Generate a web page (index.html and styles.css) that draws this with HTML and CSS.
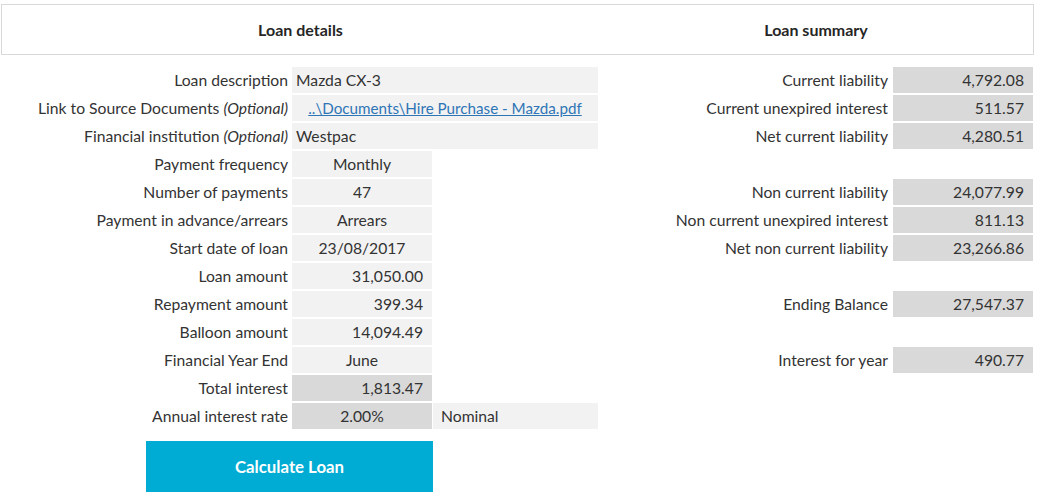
FILE: index.html
```html
<!DOCTYPE html>
<html>
<head>
<meta charset="utf-8">
<link rel="stylesheet" href="styles.css">
</head>
<body>
<div class="page">
  <header class="heading">
    <div class="heading-title">Loan details</div>
    <div class="heading-title">Loan summary</div>
  </header>
  <div class="content">
    <section class="details">
      <div class="details-grid">
        <div class="label">Loan description</div>
        <div class="cell light wide left">Mazda CX-3</div>

        <div class="label">Link to Source Documents <i>(Optional)</i></div>
        <div class="cell light wide center"><a class="link" href="#">..\Documents\Hire Purchase - Mazda.pdf</a></div>

        <div class="label">Financial institution <i>(Optional)</i></div>
        <div class="cell light wide left">Westpac</div>

        <div class="label">Payment frequency</div>
        <div class="cell light center">Monthly</div>
        <div></div>

        <div class="label">Number of payments</div>
        <div class="cell light center">47</div>
        <div></div>

        <div class="label">Payment in advance/arrears</div>
        <div class="cell light center">Arrears</div>
        <div></div>

        <div class="label">Start date of loan</div>
        <div class="cell light center">23/08/2017</div>
        <div></div>

        <div class="label">Loan amount</div>
        <div class="cell light right">31,050.00</div>
        <div></div>

        <div class="label">Repayment amount</div>
        <div class="cell light right">399.34</div>
        <div></div>

        <div class="label">Balloon amount</div>
        <div class="cell light right">14,094.49</div>
        <div></div>

        <div class="label">Financial Year End</div>
        <div class="cell light center">June</div>
        <div></div>

        <div class="label">Total interest</div>
        <div class="cell dark right">1,813.47</div>
        <div></div>

        <div class="label">Annual interest rate</div>
        <div class="cell dark center">2.00%</div>
        <div class="cell light indent side">Nominal</div>
      </div>
      <div class="actions">
        <button class="calc-btn" type="button">Calculate Loan</button>
      </div>
    </section>
    <section class="summary">
      <div class="summary-grid">
        <div class="label">Current liability</div>
        <div class="cell dark right">4,792.08</div>
        <div class="label">Current unexpired interest</div>
        <div class="cell dark right">511.57</div>
        <div class="label">Net current liability</div>
        <div class="cell dark right">4,280.51</div>
        <div class="spacer"></div>

        <div class="label">Non current liability</div>
        <div class="cell dark right">24,077.99</div>
        <div class="label">Non current unexpired interest</div>
        <div class="cell dark right">811.13</div>
        <div class="label">Net non current liability</div>
        <div class="cell dark right">23,266.86</div>
        <div class="spacer"></div>

        <div class="label">Ending Balance</div>
        <div class="cell dark right">27,547.37</div>
        <div class="spacer"></div>

        <div class="label">Interest for year</div>
        <div class="cell dark right">490.77</div>
      </div>
    </section>
  </div>
</div>
</body>
</html>
```

FILE: styles.css
```css
* { box-sizing: border-box; }
html, body { margin: 0; padding: 0; background: #ffffff; }
body {
  font-family: Lato, "Liberation Sans", sans-serif;
  font-size: 15.7px;
  color: #333333;
}
.page {
  padding: 4px 0 0 1px;
  width: 1034px;
}
.heading {
  display: grid;
  grid-template-columns: 597px 1fr;
  height: 51px;
  border: 1px solid #d9d9d9;
  align-items: center;
}
.heading-title {
  text-align: center;
  font-weight: bold;
  font-size: 16px;
  color: #262626;
}
.content {
  display: flex;
  margin-left: -1px;
  padding-top: 12px;
}
.details { width: 598px; }
.details-grid {
  display: grid;
  grid-template-columns: 292px 140px 166px;
  grid-auto-rows: 26px;
  row-gap: 2px;
}
.details-grid > .label { padding-right: 4px; }
.side { margin-left: 1px; }
.label {
  text-align: right;
  line-height: 26px;
  white-space: nowrap;
}
.label i { font-style: italic; }
.cell {
  line-height: 26px;
  white-space: nowrap;
  overflow: hidden;
}
.light { background: #f2f2f2; }
.dark { background: #d9d9d9; }
.wide { grid-column: span 2; }
.left { text-align: left; padding-left: 4px; }
.center { text-align: center; }
.right { text-align: right; padding-right: 9px; }
.indent { padding-left: 8px; }
.link { color: #2e75b6; text-decoration: underline; font-size: 15.2px; }
.actions {
  padding: 12px 0 0 146px;
}
.calc-btn {
  display: block;
  width: 287px;
  height: 51px;
  border: 0;
  background: #00acd4;
  color: #ffffff;
  font-family: Lato, "Liberation Sans", sans-serif;
  font-weight: bold;
  font-size: 16.8px;
  padding: 0;
}
.summary {
  width: 435px;
}
.summary-grid {
  display: grid;
  grid-template-columns: 290px 140px;
  grid-auto-rows: 26px;
  row-gap: 2px;
  column-gap: 5px;
}
.spacer { grid-column: span 2; }
```
